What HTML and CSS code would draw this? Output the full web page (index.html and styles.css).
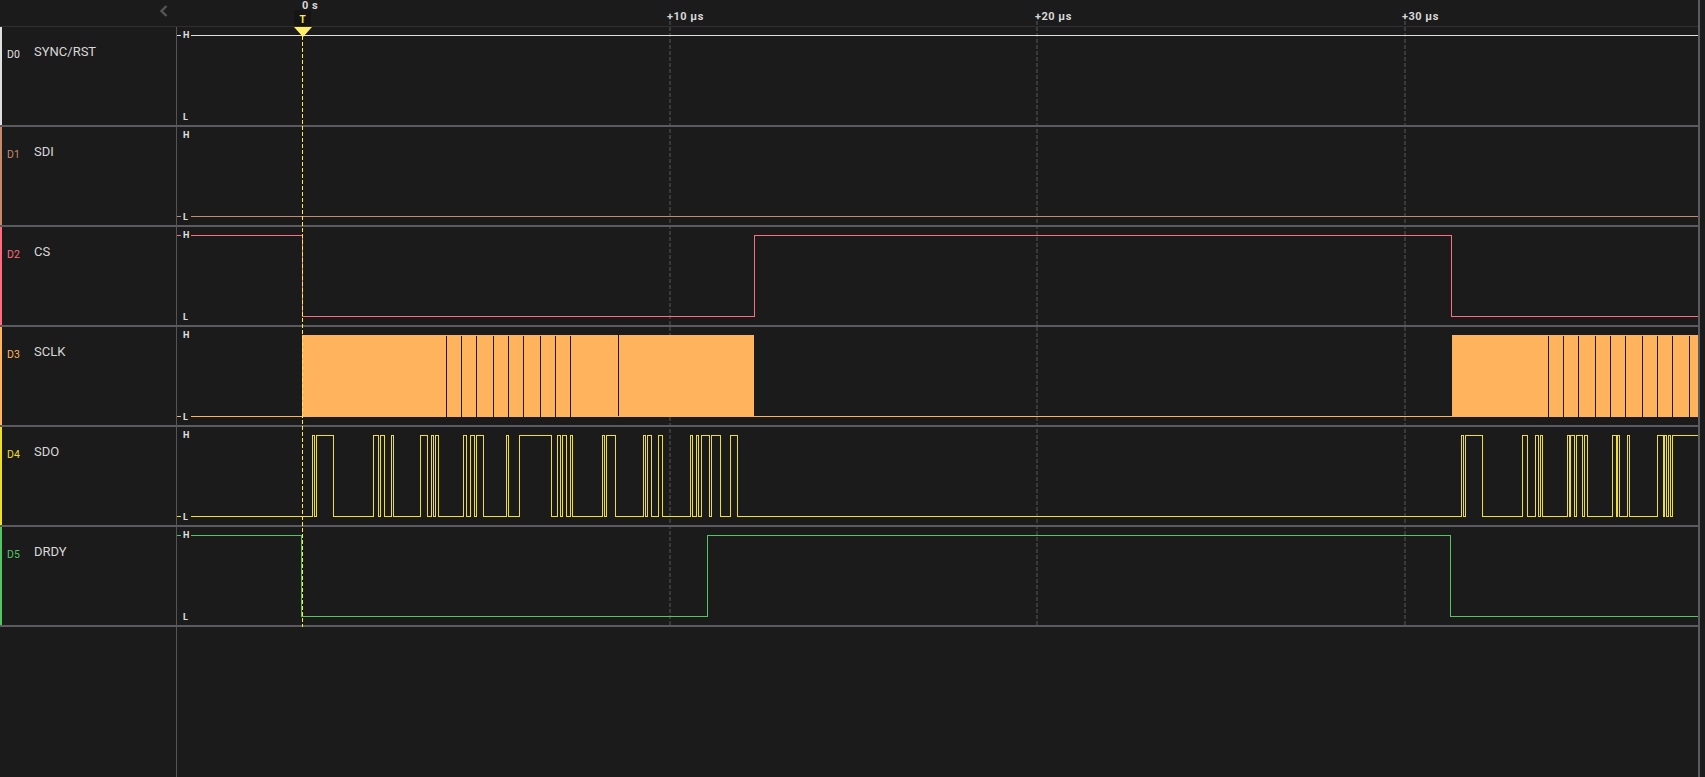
FILE: index.html
```html
<!DOCTYPE html>
<html lang="en">
<head>
    <meta charset="UTF-8">
    <title>Logic Analyzer</title>
    <link rel="stylesheet" href="styles.css">
</head>
<body>
    <div class="app">
        <div class="gridline gridline-10"></div>
        <div class="gridline gridline-20"></div>
        <div class="gridline gridline-30"></div>

        <header class="ruler">
            <div class="ruler-side">
                <svg class="chevron" width="8" height="12" viewBox="0 0 8 12"><path d="M6.5 1 L1.5 6 L6.5 11" fill="none" stroke="#555" stroke-width="2.4"/></svg>
            </div>
            <div class="ruler-axis">
                <span class="tick tick-0">0 s</span>
                <span class="tick tick-10">+10 µs</span>
                <span class="tick tick-20">+20 µs</span>
                <span class="tick tick-30">+30 µs</span>
                <span class="trigger-badge">T</span>
            </div>
        </header>

        <main class="channels">
            <section class="channel ch-d0">
                <div class="channel-label"><span class="channel-id">D0</span><span class="channel-name">SYNC/RST</span></div>
                <div class="plot">
                    <svg class="wave" viewBox="177 27 1521 98"><path d="M177 35.5H1698"/></svg>
                    <span class="level level-h">H</span><span class="level level-l">L</span>
                </div>
            </section>
            <section class="channel ch-d1">
                <div class="channel-label"><span class="channel-id">D1</span><span class="channel-name">SDI</span></div>
                <div class="plot">
                    <svg class="wave" viewBox="177 127 1521 98"><path d="M177 216.5H1698"/></svg>
                    <span class="level level-h">H</span><span class="level level-l">L</span>
                </div>
            </section>
            <section class="channel ch-d2">
                <div class="channel-label"><span class="channel-id">D2</span><span class="channel-name">CS</span></div>
                <div class="plot">
                    <svg class="wave" viewBox="177 227 1521 98"><path d="M177 235.5H302.5V316.5H754.5V235.5H1451.5V316.5H1698"/></svg>
                    <span class="level level-h">H</span><span class="level level-l">L</span>
                </div>
            </section>
            <section class="channel ch-d3">
                <div class="channel-label"><span class="channel-id">D3</span><span class="channel-name">SCLK</span></div>
                <div class="plot">
                    <svg class="wave" viewBox="177 327 1521 98">
                        <path d="M177 416.5H302M754 416.5H1452"/>
                        <rect class="burst" x="302" y="335" width="452" height="82"/>
                        <rect class="burst" x="1452" y="335" width="246" height="82"/>
                        <path class="gap" d="M446.5 336V417M461.5 336V417M476.5 336V417M493.5 336V417M508.5 336V417M523.5 336V417M540.5 336V417M555.5 336V417M570.5 336V417M618.5 335V416"/>
                        <path class="gap" d="M1548.5 336V417M1563.5 336V417M1578.5 336V417M1595.5 336V417M1610.5 336V417M1625.5 336V417M1642.5 336V417M1657.5 336V417M1672.5 336V417M1689.5 336V417"/>
                    </svg>
                    <span class="level level-h">H</span><span class="level level-l">L</span>
                </div>
            </section>
            <section class="channel ch-d4">
                <div class="channel-label"><span class="channel-id">D4</span><span class="channel-name">SDO</span></div>
                <div class="plot">
                    <svg class="wave" viewBox="177 427 1521 98"><path d="M177 516.5H312.5V435.5H314.5V516.5H316.5V435.5H333.5V516.5H373.5V435.5H378.5V516.5H380.5V435.5H384.5V516.5H391.5V435.5H393.5V516.5H420.5V435.5H427.5V516.5H431.5V435.5H433.5V516.5H435.5V435.5H438.5V516.5H463.5V435.5H466.5V516.5H470.5V435.5H474.5V516.5H476.5V435.5H483.5V516.5H506.5V435.5H508.5V516.5H519.5V435.5H551.5V516.5H557.5V435.5H560.5V516.5H562.5V435.5H566.5V516.5H570.5V435.5H572.5V516.5H602.5V435.5H604.5V516.5H606.5V435.5H615.5V516.5H643.5V435.5H645.5V516.5H647.5V435.5H651.5V516.5H658.5V435.5H662.5V516.5H690.5V435.5H692.5V516.5H696.5V435.5H698.5V516.5H701.5V435.5H709.5V516.5H711.5V435.5H720.5V516.5H730.5V435.5H737.5V516.5H1461.5V435.5H1463.5V516.5H1465.5V435.5H1482.5V516.5H1522.5V435.5H1527.5V516.5H1535.5V435.5H1538.5V516.5H1540.5V435.5H1542.5V516.5H1567.5V435.5H1569.5V516.5H1570.5V435.5H1574.5V516.5H1576.5V435.5H1582.5V516.5H1584.5V435.5H1587.5V516.5H1612.5V435.5H1616.5V516.5H1617.5V435.5H1619.5V516.5H1627.5V435.5H1629.5V516.5H1657.5V435.5H1663.5V516.5H1664.5V435.5H1666.5V516.5H1668.5V435.5H1670.5V516.5H1672.5V435.5H1698"/></svg>
                    <span class="level level-h">H</span><span class="level level-l">L</span>
                </div>
            </section>
            <section class="channel ch-d5">
                <div class="channel-label"><span class="channel-id">D5</span><span class="channel-name">DRDY</span></div>
                <div class="plot">
                    <svg class="wave" viewBox="177 527 1521 98"><path d="M177 535.5H301.5V616.5H707.5V535.5H1450.5V616.5H1698"/></svg>
                    <span class="level level-h">H</span><span class="level level-l">L</span>
                </div>
            </section>
        </main>

        <div class="empty-space"></div>

        <div class="trigger-line"></div>
        <svg class="trigger-arrow" width="18" height="10" viewBox="0 0 18 10"><path d="M0 0H18L9 10Z"/></svg>
    </div>
</body>
</html>
```

FILE: styles.css
```css
html, body {
    margin: 0;
    height: 100%;
    background: #1b1b1b;
    overflow: hidden;
}
body {
    font-family: Roboto, "Liberation Sans", sans-serif;
    color: #d8d8d8;
}
.app {
    position: relative;
    display: flex;
    flex-direction: column;
    width: 1700px;
    height: 777px;
    box-sizing: border-box;
    border-right: 2px solid #5a5a5f;
}

/* time ruler */
.ruler {
    display: flex;
    height: 26px;
    border-bottom: 1px solid #2f2f2f;
    flex-shrink: 0;
}
.ruler-side {
    display: flex;
    justify-content: flex-end;
    align-items: flex-start;
    width: 168px;
    padding-top: 5px;
    box-sizing: border-box;
}
.ruler-axis {
    position: relative;
    flex: 1;
}
.tick {
    position: absolute;
    font-size: 11px;
    font-weight: 700;
    letter-spacing: 0.5px;
    line-height: 12px;
    color: #d8d8d8;
    white-space: nowrap;
}
.tick-0 { left: 134px; top: 0; }
.tick-10 { left: 499px; top: 11px; }
.tick-20 { left: 867px; top: 11px; }
.tick-30 { left: 1234px; top: 11px; }
.trigger-badge {
    position: absolute;
    left: 126px;
    top: 10px;
    width: 17px;
    height: 16px;
    border-radius: 2px 2px 0 0;
    background: #151515;
    color: #ffe94a;
    font-size: 10px;
    font-weight: 700;
    line-height: 20px;
    text-align: center;
}

/* channels */
.channels {
    position: relative;
    z-index: 1;
    flex-shrink: 0;
}
.channel {
    display: flex;
    height: 100px;
    box-sizing: border-box;
    border-bottom: 2px solid #5a5a5f;
}
.channel-label {
    display: flex;
    align-items: flex-start;
    width: 176px;
    box-sizing: border-box;
    padding: 17px 0 0 5px;
    border-left: 2px solid;
}
.channel-id {
    width: 27px;
    font-size: 10.5px;
    line-height: 18px;
    padding-top: 2px;
}
.channel-name {
    font-size: 13px;
    line-height: 16px;
    color: #d8d8d8;
}
.plot {
    position: relative;
    flex: 1;
    border-left: 1px solid #555;
}
.wave {
    display: block;
    width: 1521px;
    height: 98px;
    shape-rendering: crispEdges;
}
.wave path {
    fill: none;
    stroke: currentColor;
    stroke-width: 1;
}
.wave .burst {
    fill: currentColor;
}
.wave .gap {
    stroke: #1b1b1b;
}
.level {
    position: absolute;
    left: 4px;
    width: 8px;
    height: 10px;
    padding-left: 2px;
    border-radius: 2px;
    background: #1b1b1b;
    color: #e0e0e0;
    font-size: 9px;
    font-weight: 700;
    line-height: 10px;
}
.level-h { top: 3px; }
.level-l { bottom: 3px; }

.ch-d0 .channel-label, .ch-d0 .channel-id, .ch-d0 .wave { color: #e0e0e0; border-color: #e0e0e0; }
.ch-d1 .channel-label, .ch-d1 .channel-id, .ch-d1 .wave { color: #c58a6c; border-color: #c58a6c; }
.ch-d2 .channel-label, .ch-d2 .channel-id, .ch-d2 .wave { color: #ff6b7f; border-color: #ff6b7f; }
.ch-d3 .channel-label, .ch-d3 .channel-id, .ch-d3 .wave { color: #ffb35c; border-color: #ffb35c; }
.ch-d4 .channel-label, .ch-d4 .channel-id, .ch-d4 .wave { color: #efdf2a; border-color: #efdf2a; }
.ch-d5 .channel-label, .ch-d5 .channel-id, .ch-d5 .wave { color: #55c463; border-color: #55c463; }

.empty-space {
    flex: 1;
    margin-left: 176px;
    border-left: 1px solid #555;
}

/* overlays: gridlines and trigger cursor */
.gridline {
    position: absolute;
    top: 21px;
    height: 605px;
    width: 2px;
    background: repeating-linear-gradient(to bottom, #3a3a3a 0, #3a3a3a 4px, transparent 4px, transparent 6px);
}
.gridline-10 { left: 669px; }
.gridline-20 { left: 1036px; }
.gridline-30 { left: 1404px; }
.trigger-line {
    position: absolute;
    z-index: 2;
    left: 302px;
    top: 36px;
    width: 1px;
    height: 591px;
    background: repeating-linear-gradient(to bottom, #ffe94a 0, #ffe94a 4px, transparent 4px, transparent 6px);
}
.trigger-arrow {
    position: absolute;
    z-index: 3;
    left: 294px;
    top: 27px;
    fill: #fff06a;
}
```
